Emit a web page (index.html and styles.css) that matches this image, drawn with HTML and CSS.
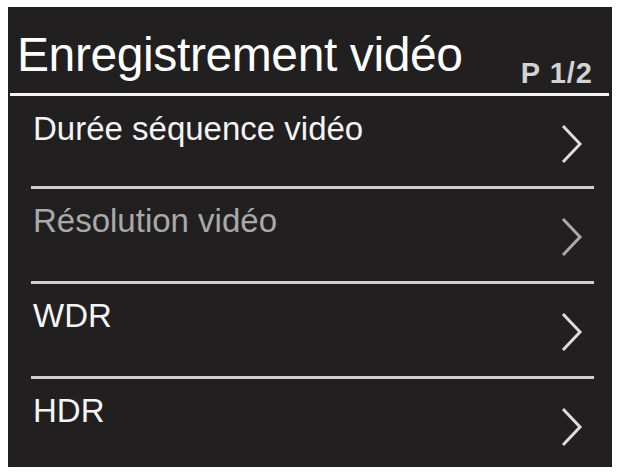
FILE: index.html
```html
<!DOCTYPE html>
<html lang="fr">
<head>
<meta charset="utf-8">
<title>Enregistrement vidéo</title>
<link rel="stylesheet" href="styles.css">
</head>
<body>
<div class="panel">
  <div class="header">
    <div class="title">Enregistrement vidéo</div>
    <div class="page">P 1/2</div>
  </div>
  <div class="header-line"></div>
  <div class="list">
    <div class="row">
      <div class="label">Durée séquence vidéo</div>
      <svg class="chev" width="24" height="40" viewBox="0 0 24 40"><polyline points="3,2 20,20 3,38" fill="none" stroke="#dcdcdc" stroke-width="3"/></svg>
    </div>
    <div class="row dim">
      <div class="label">Résolution vidéo</div>
      <svg class="chev" width="24" height="40" viewBox="0 0 24 40"><polyline points="3,2 20,20 3,38" fill="none" stroke="#a9a9a9" stroke-width="3"/></svg>
    </div>
    <div class="row">
      <div class="label">WDR</div>
      <svg class="chev" width="24" height="40" viewBox="0 0 24 40"><polyline points="3,2 20,20 3,38" fill="none" stroke="#dcdcdc" stroke-width="3"/></svg>
    </div>
    <div class="row last">
      <div class="label">HDR</div>
      <svg class="chev" width="24" height="40" viewBox="0 0 24 40"><polyline points="3,2 20,20 3,38" fill="none" stroke="#dcdcdc" stroke-width="3"/></svg>
    </div>
  </div>
</div>
</body>
</html>
```

FILE: styles.css
```css
html, body {
  margin: 0;
  padding: 0;
  background: #ffffff;
}
body {
  padding: 7px 6px 6px 8px;
  font-family: "Liberation Sans", Arial, sans-serif;
}
.panel {
  width: 604px;
  height: 460px;
  background: #221f20;
  box-sizing: border-box;
  display: flex;
  flex-direction: column;
  overflow: hidden;
}
.header {
  flex: 0 0 86px;
  display: flex;
  justify-content: space-between;
  align-items: flex-start;
  padding: 0 19px 0 9px;
}
.title {
  padding-top: 24px;
  font-size: 48px;
  line-height: 48px;
  color: #ffffff;
  letter-spacing: -0.4px;
}
.page {
  padding-top: 52px;
  font-size: 29px;
  line-height: 29px;
  font-weight: bold;
  letter-spacing: 1px;
  color: #d2d2d2;
}
.header-line {
  flex: 0 0 3px;
  margin: 0 3px 0 2px;
  background: #f4f4f4;
}
.list {
  flex: 0 0 auto;
  display: flex;
  flex-direction: column;
  margin: 0 18px 0 23px;
}
.row {
  flex: 0 0 auto;
  height: 92px;
  display: flex;
  justify-content: space-between;
  align-items: flex-start;
  border-bottom: 3px solid #cfcfcf;
  padding: 0 10px 0 2px;
}
.row:first-child {
  height: 90px;
}
.row.last {
  height: 88px;
  border-bottom: none;
}
.label {
  padding-top: 15px;
  font-size: 33px;
  line-height: 33px;
  color: #f4f4f4;
}
.row:first-child .label {
  padding-top: 16px;
}
.row.dim .label {
  color: #a9a9a9;
}
.chev {
  margin-top: 28px;
  display: block;
}
```
